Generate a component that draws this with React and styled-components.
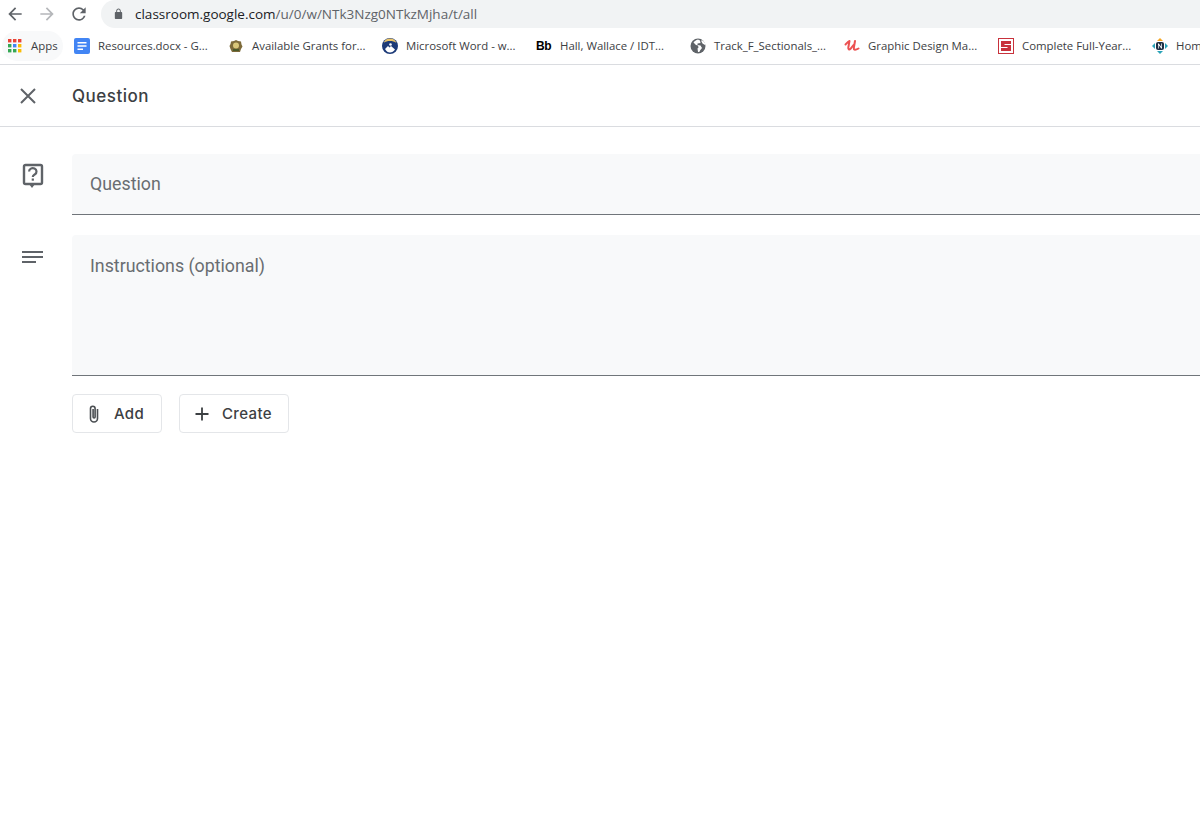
import React from 'react';
import styled, { createGlobalStyle } from 'styled-components';

const GlobalStyle = createGlobalStyle`
    html, body {
        margin: 0;
        padding: 0;
        background: #fff;
        overflow: hidden;
    }
    * {
        box-sizing: border-box;
    }
`;

const Page = styled.div`
    width: 1200px;
    height: 831px;
    overflow: hidden;
    background: #fff;
    font-family: Roboto, "Liberation Sans", sans-serif;
`;

const Toolbar = styled.div`
    display: flex;
    align-items: flex-start;
    height: 28px;
`;

const NavButton = styled.div`
    width: 32px;
    height: 28px;
    flex: none;
    display: flex;
    justify-content: center;
    padding-top: 4px;
    color: ${(p) => p.$color || '#5f6368'};
`;

const NavGroup = styled.div`
    display: flex;
    width: 102px;
    margin-left: -1px;
`;

const AddressBar = styled.div`
    flex: 1;
    height: 28px;
    display: flex;
    align-items: center;
    padding-left: 12px;
    gap: 11px;
    background: #f1f3f4;
    border-radius: 14px 0 0 14px;
    font-family: "Open Sans", sans-serif;
    font-size: 13.5px;
    color: #5f6368;
`;

const Host = styled.span`
    color: #202124;
`;

const Bookmarks = styled.div`
    display: flex;
    align-items: center;
    height: 37px;
    padding: 0 0 1px 2px;
    border-bottom: 1px solid #dadce0;
    white-space: nowrap;
    overflow: hidden;
    font-family: "Open Sans", sans-serif;
    font-size: 11.4px;
    color: #3c4043;
`;

const AppsChip = styled.div`
    display: flex;
    align-items: center;
    width: 61px;
    height: 30px;
    flex: none;
    margin-right: 11px;
    padding-left: 5px;
    gap: 8px;
    border-radius: 15px;
    background: #f8f9fa;
`;

const Bookmark = styled.div`
    display: flex;
    align-items: center;
    flex: none;
    width: 154px;
    gap: 8px;
`;

const Favicon = styled.svg`
    width: 16px;
    height: 16px;
    flex: none;
`;

const Header = styled.header`
    display: flex;
    align-items: center;
    height: 62px;
    padding-left: 17px;
    border-bottom: 1px solid #dadce0;
`;

const CloseButton = styled.div`
    width: 22px;
    height: 22px;
    margin-right: 33px;
    color: #5f6368;
`;

const Title = styled.h1`
    margin: 0;
    font-family: Inter, Roboto, sans-serif;
    font-size: 17px;
    font-weight: 500;
    letter-spacing: 0.5px;
    color: #3c4043;
`;

const Form = styled.main`
    display: flex;
    flex-direction: column;
    gap: 20px;
    padding-top: 27px;
`;

const Row = styled.div`
    display: flex;
`;

const RowIcon = styled.div`
    width: 72px;
    flex: none;
    display: flex;
    justify-content: center;
    padding: ${(p) => p.$top}px 8px 0 0;
    color: #5f6368;
`;

const Field = styled.div`
    flex: 1;
    height: ${(p) => p.$height}px;
    padding: ${(p) => p.$top}px 18px 0;
    background: #f8f9fa;
    border-bottom: 1px solid #70757a;
    border-radius: 4px 0 0 0;
    font-size: 17.8px;
    line-height: 24px;
    color: #696d71;
`;

const Actions = styled.div`
    display: flex;
    gap: 17px;
    margin: -2px 0 0 72px;
`;

const ActionButton = styled.button`
    display: flex;
    align-items: center;
    height: 39px;
    width: ${(p) => p.$width}px;
    padding: 0 0 0 13px;
    gap: ${(p) => p.$gap}px;
    background: #fff;
    border: 1px solid #e4e6e9;
    border-radius: 4px;
    font-family: Inter, Roboto, sans-serif;
    font-size: 15px;
    font-weight: 500;
    letter-spacing: 0.35px;
    color: #3c4043;
`;

const appsColors = ['#ea4335', '#ea4335', '#ea4335', '#34a853', '#4285f4', '#fbbc04', '#34a853', '#34a853', '#fbbc04'];

const AppsIcon = () => (
    <Favicon viewBox="0 0 16 16">
        {appsColors.map((c, i) => (
            <rect key={i} x={1 + (i % 3) * 5} y={1 + Math.floor(i / 3) * 5} width="3.4" height="3.4" fill={c} />
        ))}
    </Favicon>
);

const DocIcon = () => (
    <Favicon viewBox="0 0 16 16">
        <rect width="16" height="16" rx="2" fill="#4285f4" />
        <path d="M3.5 4h9v1.6h-9zM3.5 7.2h9v1.6h-9zM3.5 10.4h5.5V12H3.5z" fill="#fff" />
    </Favicon>
);

const GrantsIcon = () => (
    <Favicon viewBox="0 0 16 16">
        <path d="M8 2l2 1 3 .5.5 3 1 2-1.500 2.500-1 3H4l-1.500-3L1.500 8l1-2 .5-2.500L6 3z" fill="#7d6a3a" />
        <circle cx="8" cy="7.500" r="3" fill="#d9c77a" />
        <rect x="5" y="11" width="6" height="2" fill="#4b5a2a" />
    </Favicon>
);

const WordIcon = () => (
    <Favicon viewBox="0 0 16 16">
        <circle cx="8" cy="8" r="8" fill="#1c3a78" />
        <path d="M1.500 5a7 7 0 0 1 13 0c-2-1.500-4-2-6.500-2s-4.500.5-6.500 2z" fill="#e9c46a" />
        <path d="M3 11l3-3 1.500 1.500L9 8l4 3.500c-1.300 2-3 3-5 3s-3.700-1-5-3.500z" fill="#fff" />
        <circle cx="8.500" cy="6.500" r="1.300" fill="#fff" />
    </Favicon>
);

const BbIcon = styled.span`
    width: 16px;
    flex: none;
    font-family: "Liberation Sans", sans-serif;
    font-size: 12px;
    font-weight: 700;
    letter-spacing: -0.3px;
    color: #000;
`;

const GlobeIcon = () => (
    <Favicon viewBox="0 0 16 16">
        <circle cx="8" cy="8" r="7.500" fill="#5f6368" />
        <path d="M8 1.500C6 2 4.500 3 3.500 4.500L6 7l2 .5.500 2-1 1 .5 3.500c1 0 2-.5 2-1.500l2-2.500-1.500-2.500L7.500 7V5.500l3-.5-.5-2.500z" fill="#fff" />
        <path d="M11 2.500l1.500 3L15 7V5l-2-2.500z" fill="#fff" />
    </Favicon>
);

const UdemyIcon = () => (
    <Favicon viewBox="0 0 16 16">
        <path d="M1.500 6.500C2.800 5 4 3.500 5.500 3L4.300 9.500c-.3 2 1 2.500 2.200 1.300L9.500 7" fill="none" stroke="#ec5252" strokeWidth="2" strokeLinecap="round" strokeLinejoin="round" />
        <path d="M11 3l-1.200 7c-.2 2 1.500 2.300 4.700.5" fill="none" stroke="#ec5252" strokeWidth="2" strokeLinecap="round" />
    </Favicon>
);

const SavvasIcon = () => (
    <Favicon viewBox="0 0 16 16">
        <rect x="0.500" y="0.500" width="15" height="15" fill="#fff" stroke="#c8323c" />
        <path d="M3 3h10v3H6.500v1H13v6H3v-3h6.500V9H3z" fill="#c8323c" />
    </Favicon>
);

const NearpodIcon = () => (
    <Favicon viewBox="0 0 16 16">
        <path d="M8 0l3 3H5z" fill="#f5a623" />
        <path d="M8 16l3-3H5z" fill="#2aa3b8" />
        <path d="M0 8l3-3v6z" fill="#2aa3b8" />
        <path d="M16 8l-3-3v6z" fill="#2aa3b8" />
        <rect x="4" y="4" width="8" height="8" rx="2" fill="#1f3044" />
        <path d="M6 10.500V5.500h.8L9.300 9V5.500H10v5h-.8L6.700 7v3.500z" fill="#fff" />
    </Favicon>
);

const bookmarks = [
    { icon: <DocIcon />, label: 'Resources.docx - G...' },
    { icon: <GrantsIcon />, label: 'Available Grants for...' },
    { icon: <WordIcon />, label: 'Microsoft Word - w...' },
    { icon: <BbIcon>Bb</BbIcon>, label: 'Hall, Wallace / IDT...' },
    { icon: <GlobeIcon />, label: 'Track_F_Sectionals_...' },
    { icon: <UdemyIcon />, label: 'Graphic Design Ma...' },
    { icon: <SavvasIcon />, label: 'Complete Full-Year...' },
    { icon: <NearpodIcon />, label: 'Home' },
];

const App = () => {
    return (
        <Page>
            <GlobalStyle />
            <Toolbar>
                <NavGroup>
                    <NavButton>
                        <svg width="20" height="20" viewBox="0 0 24 24" fill="currentColor">
                            <path d="M20 11H7.830l5.590-5.590L12 4l-8 8 8 8 1.410-1.410L7.830 13H20v-2z" />
                        </svg>
                    </NavButton>
                    <NavButton $color="#b5b7ba">
                        <svg width="20" height="20" viewBox="0 0 24 24" fill="currentColor">
                            <path d="M12 4l-1.410 1.410L16.170 11H4v2h12.170l-5.580 5.590L12 20l8-8z" />
                        </svg>
                    </NavButton>
                    <NavButton>
                        <svg width="20" height="20" viewBox="0 0 24 24" fill="currentColor">
                            <path d="M17.650 6.350A7.958 7.958 0 0 0 12 4c-4.420 0-7.990 3.580-7.990 8s3.570 8 7.990 8c3.730 0 6.840-2.550 7.730-6h-2.080A5.990 5.990 0 0 1 12 18c-3.310 0-6-2.690-6-6s2.690-6 6-6c1.660 0 3.140.69 4.220 1.780L13 11h7V4l-2.350 2.350z" />
                        </svg>
                    </NavButton>
                </NavGroup>
                <AddressBar>
                    <svg width="11" height="12" viewBox="0 0 24 24" fill="#5f6368" preserveAspectRatio="none">
                        <path d="M18 8h-1V6c0-2.760-2.240-5-5-5S7 3.240 7 6v2H6c-1.100 0-2 .9-2 2v10c0 1.100.9 2 2 2h12c1.100 0 2-.9 2-2V10c0-1.100-.9-2-2-2zM9 8V6c0-1.660 1.340-3 3-3s3 1.340 3 3v2H9z" />
                    </svg>
                    <span>
                        <Host>classroom.google.com</Host>/u/0/w/NTk3Nzg0NTkzMjha/t/all
                    </span>
                </AddressBar>
            </Toolbar>
            <Bookmarks>
                <AppsChip>
                    <AppsIcon />
                    Apps
                </AppsChip>
                {bookmarks.map((b) => (
                    <Bookmark key={b.label}>
                        {b.icon}
                        {b.label}
                    </Bookmark>
                ))}
            </Bookmarks>
            <Header>
                <CloseButton>
                    <svg width="22" height="22" viewBox="0 0 22 22" fill="none" stroke="currentColor" strokeWidth="2">
                        <path d="M4 4l14 14M18 4L4 18" />
                    </svg>
                </CloseButton>
                <Title>Question</Title>
            </Header>
            <Form>
                <Row>
                    <RowIcon $top={9}>
                        <svg width="24" height="26" viewBox="0 0 24 26" fill="none">
                            <rect x="4" y="2" width="18" height="19" rx="1.500" stroke="currentColor" strokeWidth="2.400" />
                            <path d="M9 21h6l-3 4z" fill="currentColor" />
                            <path d="M9.300 9a3.700 3.400 0 1 1 5.800 2.800c-1.300 1-2.100 1.400-2.100 2.700" stroke="currentColor" strokeWidth="2.200" transform="translate(-.200 -.500)" />
                            <rect x="11.700" y="15.500" width="2.200" height="2.200" fill="currentColor" />
                        </svg>
                    </RowIcon>
                    <Field $height={61} $top={18}>Question</Field>
                </Row>
                <Row>
                    <RowIcon $top={11}>
                        <svg width="24" height="24" viewBox="0 0 24 24" fill="currentColor">
                            <path d="M2 5h21v2H2zM2 10h21v2H2zM2 15h14v2H2z" />
                        </svg>
                    </RowIcon>
                    <Field $height={141} $top={19}>Instructions (optional)</Field>
                </Row>
                <Actions>
                    <ActionButton $width={90} $gap={12}>
                        <svg width="16" height="20" viewBox="0 0 16 20" fill="none" stroke="#4a4e52" strokeWidth="1.600">
                            <path d="M11.500 5v9.500a3.500 3.500 0 0 1-7 0V4.500a2.300 2.300 0 0 1 4.600 0V13a1 1 0 0 1-2 0V5" />
                        </svg>
                        Add
                    </ActionButton>
                    <ActionButton $width={110} $gap={11}>
                        <svg width="18" height="18" viewBox="0 0 18 18" fill="none" stroke="#3c4043" strokeWidth="1.800">
                            <path d="M9 2.500v13M2.500 9h13" />
                        </svg>
                        Create
                    </ActionButton>
                </Actions>
            </Form>
        </Page>
    );
};

export default App;
